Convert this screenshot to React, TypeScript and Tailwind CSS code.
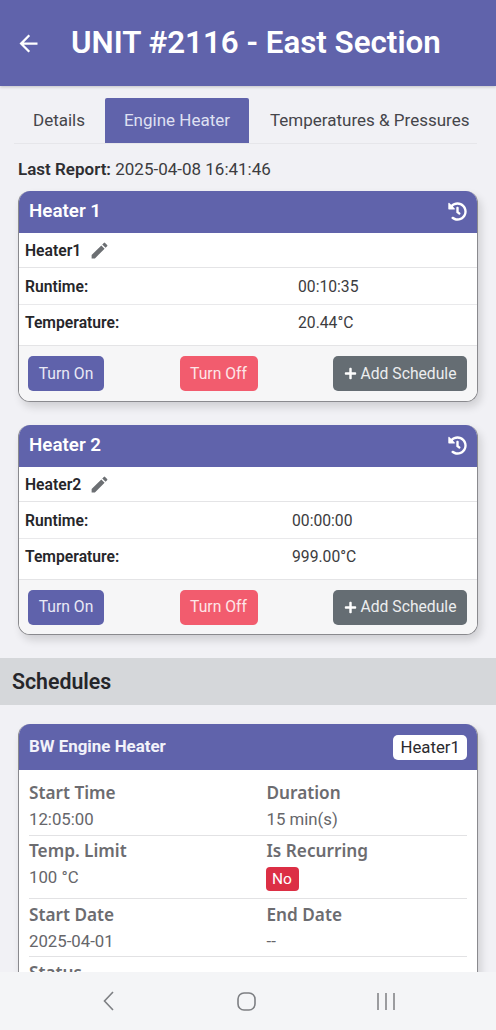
import { FaHistory, FaPlus } from "react-icons/fa";
import { MdArrowBack, MdEdit } from "react-icons/md";

interface HeaterCardProps {
  title: string;
  name: string;
  runtime: string;
  temperature: string;
  columns: string;
  footerHeight: string;
}

function HeaterCard({ title, name, runtime, temperature, columns, footerHeight }: HeaterCardProps) {
  return (
    <div className="mx-[18px] overflow-hidden rounded-[12px] border border-t-0 border-[#8a8a8e] bg-white shadow-[3px_5px_8px_rgba(0,0,0,0.14)]">
      <div className="flex h-[42px] items-center justify-between bg-[#6063ab] pr-[10px] pb-[2px] pl-[10px] text-white">
        <span className="text-[18.8px] font-semibold">{title}</span>
        <FaHistory className="h-[19px] w-[19px]" />
      </div>
      <div className="flex h-[35px] items-center gap-[8px] border-b border-[#e4e4e6] pt-[1px] pl-[6px]">
        <span className="text-[15.7px] font-semibold text-[#26262a]">{name}</span>
        <MdEdit className="h-[21px] w-[21px] text-[#6c6f73]" />
      </div>
      <div className={`grid h-[37px] items-center border-b border-[#e9e9eb] pt-[2px] pl-[6px] text-[15.7px] ${columns}`}>
        <span className="font-semibold text-[#26262a]">Runtime:</span>
        <span className="text-[#3c3c40]">{runtime}</span>
      </div>
      <div className={`grid h-[41px] items-center border-b border-[#e4e4e6] pb-[4px] pl-[6px] text-[15.7px] ${columns}`}>
        <span className="font-semibold text-[#26262a]">Temperature:</span>
        <span className="text-[#3c3c40]">{temperature}</span>
      </div>
      <div className={`flex items-center justify-between bg-[#f6f6f7] pr-[10px] pl-[9px] text-[15.7px] text-[#e9e9f5] ${footerHeight}`}>
        <button className="h-[35px] w-[76px] rounded-[5px] bg-[#5f62ab]">Turn On</button>
        <button className="h-[35px] w-[78px] rounded-[5px] bg-[#f25c6e] text-[#fde6e8]">Turn Off</button>
        <button className="flex h-[35px] w-[134px] items-center justify-center gap-[4px] rounded-[5px] bg-[#656d73] text-[#eceeef]">
          <FaPlus className="h-[13px] w-[13px] text-white" />
          <span>Add Schedule</span>
        </button>
      </div>
    </div>
  );
}

function ScheduleRow({ children, className }: { children: React.ReactNode; className: string }) {
  return (
    <div className={`grid grid-cols-[237.5px_1fr] border-b border-[#e2e2e4] ${className}`}>
      {children}
    </div>
  );
}

function Label({ children }: { children: React.ReactNode }) {
  return (
    <div className="font-['Noto_Sans',sans-serif] text-[17.2px] leading-[22px] font-semibold text-[#6c6c70]">
      {children}
    </div>
  );
}

function Value({ children }: { children: React.ReactNode }) {
  return <div className="mt-[5px] text-[16.8px] leading-[21px] text-[#66666a]">{children}</div>;
}

export default function App() {
  return (
    <div className="flex h-[1030px] w-[496px] flex-col overflow-hidden bg-[#f1f1f5] font-['Roboto',sans-serif]">
      <header className="flex h-[86px] shrink-0 items-center bg-[#6063ab] pl-[15px] text-white shadow-[0_1px_3px_rgba(0,0,0,0.2)]">
        <MdArrowBack className="h-[27px] w-[27px]" />
        <h1 className="ml-[29px] text-[31.3px] font-semibold">UNIT #2116 - East Section</h1>
      </header>

      <main className="min-h-0 flex-1 overflow-hidden">
        <nav className="mt-[12px] mr-[19px] ml-[14px] flex h-[46px] items-end border-b border-[#e6e6ea] text-[17px] text-[#45454a]">
          <div className="flex h-[45px] w-[91px] items-center pl-[19px]">Details</div>
          <div className="flex h-[45px] w-[144px] items-center justify-center rounded-t-[2px] bg-[#6063ab] text-[#dfe0f2]">
            Engine Heater
          </div>
          <div className="flex h-[45px] flex-1 items-center pl-[21px] whitespace-nowrap">Temperatures &amp; Pressures</div>
        </nav>

        <div className="mt-[15px] ml-[18px] text-[17px] leading-[20px] text-[#3c3c40]">
          <span className="font-semibold text-[#2e2e32]">Last Report:</span> 2025-04-08 16:41:46
        </div>

        <div className="mt-[12px] flex flex-col gap-[23px]">
          <HeaterCard
            title="Heater 1"
            name="Heater1"
            runtime="00:10:35"
            temperature="20.44°C"
            columns="grid-cols-[273px_1fr]"
            footerHeight="h-[55px]"
          />
          <HeaterCard
            title="Heater 2"
            name="Heater2"
            runtime="00:00:00"
            temperature="999.00°C"
            columns="grid-cols-[267px_1fr]"
            footerHeight="h-[54px]"
          />
        </div>

        <div className="mt-[23px] flex h-[47px] items-center bg-[#d5d7da] pl-[12px] text-[21.3px] font-semibold text-[#26262a]">
          Schedules
        </div>

        <div className="mx-[18px] mt-[19px] overflow-hidden rounded-t-[12px] border-x border-[#8a8a8e] bg-white shadow-[3px_5px_8px_rgba(0,0,0,0.14)]">
          <div className="flex h-[46px] items-center justify-between bg-[#6063ab] px-[10px]">
            <span className="text-[16.9px] font-bold text-[#f2f2fa]">BW Engine Heater</span>
            <span className="rounded-[5px] bg-white px-[7px] py-[2px] text-[16.8px] leading-[21px] text-[#2a2a2e]">
              Heater1
            </span>
          </div>
          <div className="px-[10px]">
            <ScheduleRow className="h-[66px] pt-[12px]">
              <div>
                <Label>Start Time</Label>
                <Value>12:05:00</Value>
              </div>
              <div>
                <Label>Duration</Label>
                <Value>15 min(s)</Value>
              </div>
            </ScheduleRow>
            <ScheduleRow className="h-[63px] pt-[4px]">
              <div>
                <Label>Temp. Limit</Label>
                <Value>100 °C</Value>
              </div>
              <div>
                <Label>Is Recurring</Label>
                <span className="mt-[5px] -ml-[1px] block h-[24px] w-[33px] rounded-[4px] bg-[#dc2f45] text-center text-[15.5px] leading-[24px] text-white">
                  No
                </span>
              </div>
            </ScheduleRow>
            <ScheduleRow className="h-[58px] pt-[5px]">
              <div>
                <Label>Start Date</Label>
                <Value>2025-04-01</Value>
              </div>
              <div>
                <Label>End Date</Label>
                <Value>--</Value>
              </div>
            </ScheduleRow>
            <div className="pt-[5px]">
              <Label>Status</Label>
            </div>
          </div>
        </div>
      </main>

      <footer className="z-10 flex h-[58px] shrink-0 items-center bg-[#f4f5f7] pl-[103px]">
        <svg viewBox="0 0 11 20" className="h-[20px] w-[11px]" fill="none" stroke="#7d7f83" strokeWidth="1.6">
          <path d="M10 1 1.5 10l8.5 9" />
        </svg>
        <svg viewBox="0 0 19 19" className="ml-[123px] h-[19px] w-[19px]" fill="none" stroke="#7d7f83" strokeWidth="1.6">
          <rect x="1" y="1" width="17" height="17" rx="6" />
        </svg>
        <svg viewBox="0 0 18 19" className="ml-[121px] h-[19px] w-[18px]" fill="none" stroke="#7d7f83" strokeWidth="1.5">
          <path d="M1 1v17M9 1v17M17 1v17" />
        </svg>
      </footer>
    </div>
  );
}
